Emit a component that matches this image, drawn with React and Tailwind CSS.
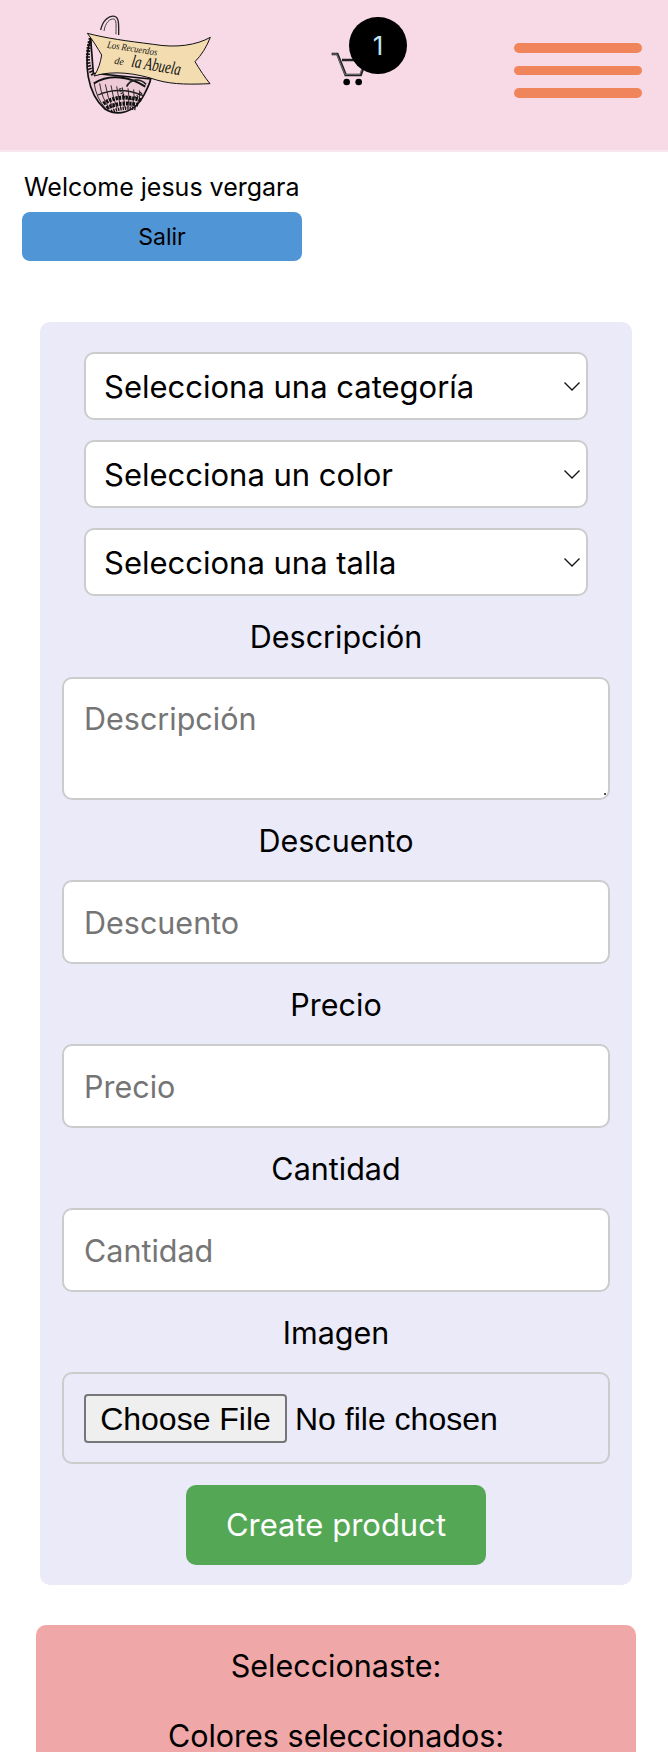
const font = "font-['Inter','Noto_Sans',sans-serif]";

function Logo() {
  const staves = [];
  for (let i = 0; i < 9; i++) {
    staves.push(<path key={i} d={`M${72 + i * 17} ${232 + i * 3} Q${78 + i * 17} ${280} ${108 + i * 11} ${312 - i}`} stroke="#111" strokeWidth="2.5" fill="none" />);
  }
  return (
    <svg viewBox="0 0 450 345" className="w-[150px] h-[115px] shrink-0">
      {/* asa */}
      <path d="M92 75 C98 45 118 30 134 34 C148 38 146 60 146 90" fill="none" stroke="#222" strokeWidth="4" />
      <path d="M102 78 C106 52 120 40 132 42 C140 45 138 62 138 88" fill="none" stroke="#444" strokeWidth="3" />
      {/* cesta */}
      <path d="M62 100 C40 170 50 265 105 312 C140 335 195 325 222 270 C232 250 240 235 242 222 L70 205 Z" fill="#eec9d6" stroke="#111" strokeWidth="5" />
      <path d="M62 100 C48 150 52 190 72 212" fill="none" stroke="#111" strokeWidth="12" strokeDasharray="5 4" />
      {staves}
      <path d="M72 235 C120 205 180 215 226 245" fill="none" stroke="#111" strokeWidth="6" />
      <path d="M84 270 C130 250 180 255 220 272" fill="none" stroke="#222" strokeWidth="4" />
      <path d="M100 296 C135 272 180 275 214 286" fill="none" stroke="#111" strokeWidth="12" strokeDasharray="7 3" />
      <path d="M110 310 C135 293 180 293 206 300" fill="none" stroke="#111" strokeWidth="12" strokeDasharray="7 3" />
      <path d="M124 320 C150 308 180 308 198 311" fill="none" stroke="#111" strokeWidth="10" strokeDasharray="4 3" />
      <path d="M150 250 C160 290 190 290 215 262" fill="none" stroke="#111" strokeWidth="8" strokeDasharray="3 4" />
      <path d="M170 245 C180 222 210 218 228 238" fill="none" stroke="#222" strokeWidth="5" />
      {/* cinta */}
      <path d="M52 85 C110 100 170 108 250 118 C320 130 380 120 421 97 C410 125 395 150 375 170 C390 195 405 218 420 236 C370 238 310 240 260 225 C200 205 130 195 72 213 C85 195 92 170 95 150 C82 128 68 105 52 85 Z" fill="#f3dcb0" stroke="#111" strokeWidth="3" />
      <g fill="#111" fontFamily="'Liberation Serif', serif" fontStyle="italic">
        <text x="110" y="128" fontSize="30" transform="rotate(9 110 128)" textLength="152" lengthAdjust="spacingAndGlyphs">Los Recuerdos</text>
        <text x="132" y="176" fontSize="30" transform="rotate(9 132 176)">de</text>
        <text x="182" y="185" fontSize="54" transform="rotate(10 182 185)" textLength="150" lengthAdjust="spacingAndGlyphs">la Abuela</text>
      </g>
    </svg>
  );
}

function Cart() {
  return (
    <div className="relative w-[120px] h-[90px] shrink-0">
      <svg viewBox="0 0 360 270" className="w-[120px] h-[90px]">
        <path d="M65 147 H82 L107 210 H152 L168 165 H96" fill="none" stroke="#222" strokeWidth="8" />
        <path d="M67 147 H80 L105 208 H150 L164 167" fill="none" stroke="#999" strokeWidth="2" />
        <circle cx="110" cy="231" r="10" fill="#000" />
        <circle cx="146" cy="231" r="10" fill="#000" />
      </svg>
      <div className="absolute left-[39px] top-[12px] w-[58px] h-[57px] rounded-full bg-black flex items-center justify-center text-[26px] text-[#bfe3f7]">
        1
      </div>
    </div>
  );
}

function Field({ label, placeholder }) {
  return (
    <>
      <label className="h-[36px] mt-[23px] mb-[21px] flex items-center justify-center text-[30.5px] text-black">{label}</label>
      <input
        placeholder={placeholder}
        className="w-[548px] h-[84px] rounded-[10px] border-2 border-[#ccc] bg-white px-[20px] text-[30.5px] placeholder:text-[#757575] outline-none"
      />
    </>
  );
}

function Sel({ text }) {
  return (
    <div className="relative w-[504px] h-[68px]">
      <select className="w-full h-full rounded-[10px] border-2 border-[#ccc] bg-white pl-[18px] pt-[2px] text-[31px] text-black appearance-none outline-none">
        <option>{text}</option>
      </select>
      <svg viewBox="0 0 16 9" className="absolute right-[8px] top-[30px] w-[16px] h-[9px] pointer-events-none">
        <path d="M.5.5 8 8 15.5.5" fill="none" stroke="#111" strokeWidth="1.3" />
      </svg>
    </div>
  );
}

export default function App() {
  return (
    <div className={`h-[1752px] overflow-hidden bg-white text-black ${font}`}>
      {/* Header */}
      <header className="h-[152px] bg-[#f8d9e6] border-b-2 border-[#f9e7ef] flex items-start">
        <div className="ml-[70px] mt-[5px]"><Logo /></div>
        <div className="ml-[90px] mt-[5px]"><Cart /></div>
        <div className="ml-[84px] mt-[43px] w-[128px] flex flex-col gap-[13px]">
          <span className="h-[9.5px] rounded-full bg-[#f0855b]" />
          <span className="h-[9.5px] rounded-full bg-[#f0855b]" />
          <span className="h-[9.5px] rounded-full bg-[#f0855b]" />
        </div>
      </header>

      <p className="mt-[18px] ml-[24px] h-[34px] leading-[34px] text-[25px]">Welcome jesus vergara</p>
      <button className="block mt-[8px] ml-[22px] w-[280px] h-[49px] pt-[2px] rounded-[8px] bg-[#5095d6] text-[23px] text-black">Salir</button>

      {/* Formulario */}
      <form className="mt-[61px] ml-[40px] w-[592px] h-[1263px] rounded-[10px] bg-[#eaeaf8] pt-[30px] flex flex-col items-center">
        <div className="flex flex-col gap-[20px]">
          <Sel text="Selecciona una categoría" />
          <Sel text="Selecciona un color" />
          <Sel text="Selecciona una talla" />
        </div>
        <label className="h-[36px] mt-[23px] mb-[22px] flex items-center text-[30.5px]">Descripción</label>
        <div className="relative h-[123px]">
          <textarea
            placeholder="Descripción"
            className="block w-[548px] h-[123px] resize-none rounded-[10px] border-2 border-[#ccc] bg-white px-[20px] pt-[22px] text-[30.5px] leading-[36px] placeholder:text-[#757575] outline-none"
          />
          <span className="absolute right-[4px] bottom-[5px] w-[2px] h-[2px] bg-[#555]" />
        </div>
        <Field label="Descuento" placeholder="Descuento" />
        <Field label="Precio" placeholder="Precio" />
        <Field label="Cantidad" placeholder="Cantidad" />
        <label className="h-[36px] mt-[23px] mb-[21px] flex items-center text-[30.5px]">Imagen</label>
        <input
          type="file"
          className="w-[548px] h-[92px] rounded-[10px] border-2 border-[#ccc] pl-[20px] pt-[20px] font-['Liberation_Sans',sans-serif] text-[32px] file:h-[49px] file:w-[203px] file:mr-[8px] file:leading-none file:bg-[#efefef] file:border-2 file:border-[#767676] file:rounded-[4px] file:text-[32px]"
        />
        <button type="button" className="mt-[21px] w-[300px] h-[80px] rounded-[10px] bg-[#54a754] text-white text-[31px]">Create product</button>
      </form>

      {/* Resumen */}
      <section className="mt-[40px] ml-[36px] w-[600px] h-[300px] rounded-[10px] bg-[#efa7a7] text-center text-[30.5px]">
        <p className="pt-[23px] h-[59px] leading-[36px]">Seleccionaste:</p>
        <p className="mt-[37px] leading-[30px]">Colores seleccionados:</p>
      </section>
    </div>
  );
}
